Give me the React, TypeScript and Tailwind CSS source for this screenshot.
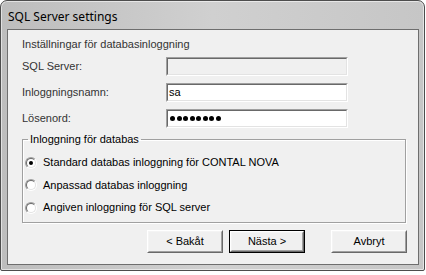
import React from 'react';

function Field({ label, disabled, children }: { label: string; disabled?: boolean; children?: React.ReactNode }) {
  return (
    <div className="flex h-[19px] items-center">
      <span className="w-[158px] pl-[14px] text-[#333]">{label}</span>
      <div className="h-[19px] w-[182px] border border-t-[#a0a0a0] border-l-[#a0a0a0] border-r-white border-b-white">
        <div
          className={`flex h-full items-center border border-t-[#696969] border-l-[#696969] border-r-[#e3e3e3] border-b-[#e3e3e3] pl-[1px] ${
            disabled ? 'bg-[#f0f0f0]' : 'bg-white'
          }`}
        >
          {children}
        </div>
      </div>
    </div>
  );
}

function Radio({ label, checked }: { label: string; checked?: boolean }) {
  return (
    <div className="flex h-[13px] items-center">
      <div className="h-[12px] w-[12px] rounded-full border border-t-[#a0a0a0] border-l-[#a0a0a0] border-r-white border-b-white">
        <div className="flex h-full w-full items-center justify-center rounded-full border border-t-[#696969] border-l-[#696969] border-r-[#e3e3e3] border-b-[#e3e3e3] bg-white">
          {checked ? <div className="h-[4px] w-[4px] rounded-full bg-black" /> : null}
        </div>
      </div>
      <span className="ml-[6px] text-black">{label}</span>
    </div>
  );
}

function Button({ label, isDefault }: { label: string; isDefault?: boolean }) {
  return (
    <button type="button" className={`h-[23px] w-[76px] ${isDefault ? 'border border-black' : ''}`}>
      <div className="h-full w-full border border-t-white border-l-white border-r-[#696969] border-b-[#696969]">
        <div className="flex h-full w-full items-center justify-center border border-t-[#f4f4f4] border-l-[#f4f4f4] border-r-[#a0a0a0] border-b-[#a0a0a0] bg-[#f0f0f0] text-black">
          {label}
        </div>
      </div>
    </button>
  );
}

export default function App() {
  return (
    <div className="h-[275px] w-[426px] bg-white font-['Liberation_Sans',Arial,sans-serif] text-[11px] leading-[13px]">
      <div className="flex h-[271px] w-[425px] flex-col rounded-t-[7px] rounded-b-[2px] border border-[#4d4d4d] bg-linear-to-r from-[#bdbdbd] via-[#d0d0d0] to-[#c6c6c6] shadow-[inset_0_0_0_1px_rgba(255,255,255,0.55)]">
        <div className="flex h-[28px] items-center pl-[7px] pt-[2px] font-['Noto_Sans',sans-serif] text-[12px] text-black">
          SQL Server settings
        </div>
        <div className="mb-[5px] ml-[6px] mr-[5px] flex flex-1 flex-col border border-[#6e6e6e] bg-[#f0f0f0]">
          <div className="pl-[14px] pt-[8px] text-[#333]">Inställningar för databasinloggning</div>
          <div className="mt-[6px] flex flex-col gap-[7px]">
            <Field label="SQL Server:" disabled />
            <Field label="Inloggningsnamn:">
              <span className="text-black">sa</span>
            </Field>
            <Field label="Lösenord:">
              <div className="ml-[1px] flex gap-[1.5px]">
                {Array.from({ length: 8 }).map((_, i) => (
                  <div key={i} className="h-[5px] w-[5px] rounded-full bg-black" />
                ))}
              </div>
            </Field>
          </div>
          <fieldset className="ml-[14px] mt-[5px] h-[90px] w-[384px] border border-[#a0a0a0] pl-[2px] shadow-[1px_1px_0_#fff,inset_1px_1px_0_#fff]">
            <legend className="ml-[3px] px-[2px] text-black">Inloggning för databas</legend>
            <div className="mt-[10px] flex flex-col gap-[9.5px]">
              <Radio label="Standard databas inloggning för CONTAL NOVA" checked />
              <Radio label="Anpassad databas inloggning" />
              <Radio label="Angiven inloggning för SQL server" />
            </div>
          </fieldset>
          <div className="mt-[7px] flex justify-end pr-[11px]">
            <Button label="< Bakåt" />
            <div className="ml-[6px]">
              <Button label="Nästa >" isDefault />
            </div>
            <div className="ml-[26px]">
              <Button label="Avbryt" />
            </div>
          </div>
        </div>
      </div>
    </div>
  );
}
